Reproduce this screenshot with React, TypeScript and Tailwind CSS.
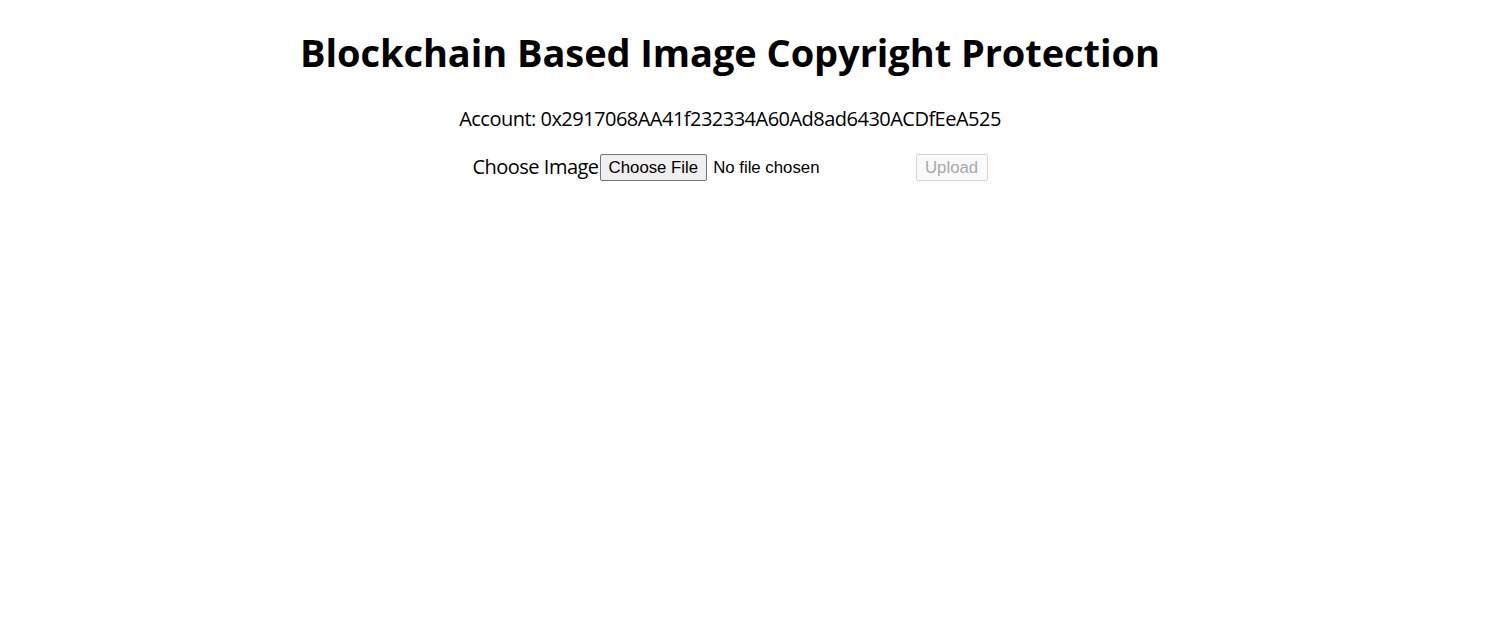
import React from "react";

const ACCOUNT = "0x2917068AA41f232334A60Ad8ad6430ACDfEeA525";

export default function App() {
    return (
        <div className="min-h-[631px] bg-white text-black">
            <div className="w-[1460px] text-center font-['Open_Sans',sans-serif]">
                <h1 className="pt-[24px] text-[38px] font-bold leading-[56px] tracking-[-0.07px]">
                    Blockchain Based Image Copyright Protection
                </h1>
                <p className="mt-[25px] text-[20px] leading-[28px] tracking-[-0.52px]">Account: {ACCOUNT}</p>
                <form className="mt-[20px] flex h-[28px] items-center justify-center" onSubmit={(e) => e.preventDefault()}>
                    <label htmlFor="image" className="mr-[1px] text-[20px] leading-[28px] tracking-[-0.5px]">
                        Choose Image
                    </label>
                    <input
                        id="image"
                        type="file"
                        accept="image/*"
                        className="w-[316px] text-left font-['Liberation_Sans',Arial,sans-serif] text-[16.8px] file:mr-[6px] file:h-[27px] file:rounded-[2px] file:border file:border-solid file:border-[#767676] file:bg-[#efefef] file:px-[8px] file:text-[16.8px]"
                    />
                    <button
                        type="submit"
                        disabled
                        className="h-[27px] w-[72px] rounded-[2px] border border-[#d6d6d6] bg-[#fafafa] font-['Liberation_Sans',Arial,sans-serif] text-[16.8px] text-[#a8a8a8]"
                    >
                        Upload
                    </button>
                </form>
            </div>
        </div>
    );
}
